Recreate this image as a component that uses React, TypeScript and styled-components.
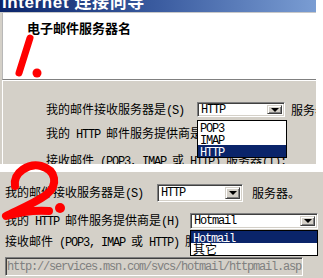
import React from "react";
import styled, { createGlobalStyle } from "styled-components";

const GlobalStyle = createGlobalStyle`
  body {
    margin: 0;
    background: #ffffff;
    font-family: "Noto Sans CJK SC", sans-serif;
    font-size: 12px;
    color: #000;
  }
`;

const Page = styled.div`
  position: relative;
  width: 323px;
  height: 278px;
  overflow: hidden;
  background: #ffffff;
  display: flex;
  flex-direction: column;
`;

const TopShot = styled.section`
  width: 316px;
  height: 164px;
  flex: none;
  background: #d4d0c8;
  display: flex;
  flex-direction: column;
  overflow: hidden;
`;

const TitleBar = styled.div`
  height: 12px;
  flex: none;
  overflow: hidden;
  background: linear-gradient(to right, #0a246a, #3b5ca0 50%, #7a9dd3);
  border-bottom: 1px solid #c8c8c8;
`;

const TitleText = styled.div`
  margin-top: -7px;
  padding-left: 2px;
  font: bold 17px/19px "Liberation Sans", "Noto Sans CJK SC", sans-serif;
  letter-spacing: 0.6px;
  color: #ffffff;
  white-space: nowrap;
`;

const Header = styled.div`
  height: 57px;
  flex: none;
  margin-left: 2px;
  padding: 9px 0 0 24px;
  box-sizing: content-box;
  background: #ffffff;
  border-left: 1px solid #b8b8b8;
  border-bottom: 1px solid #808080;
  font-weight: bold;
  font-size: 13px;
  line-height: 12px;
`;

const Body = styled.div`
  flex: 1;
  margin-left: 2px;
  padding: 21px 0 0 43px;
  border-top: 1px solid #ffffff;
  border-left: 1px solid #ffffff;
  display: flex;
  flex-direction: column;
`;

const BottomShot = styled.section`
  flex: 1;
  margin-top: 8px;
  background: #d4d0c8;
  padding: 12px 0 0 5px;
  display: flex;
  flex-direction: column;
`;

const Row = styled.div<{ $h: number; $mt?: number }>`
  height: ${(p) => p.$h}px;
  margin-top: ${(p) => p.$mt ?? 0}px;
  display: flex;
  align-items: center;
  line-height: 12px;
  white-space: nowrap;
`;

// half-width latin, like SimSun: 6px per character
const Lat = styled.span`
  font-family: "Liberation Mono", monospace;
  font-size: 12px;
  letter-spacing: -1.2px;
`;

const After = styled.span<{ $ml: number }>`
  margin-left: ${(p) => p.$ml}px;
`;

const Combo = styled.div<{ $w: number; $h: number; $ml: number }>`
  position: relative;
  flex: none;
  box-sizing: border-box;
  width: ${(p) => p.$w}px;
  height: ${(p) => p.$h}px;
  margin-left: ${(p) => p.$ml}px;
  background: #ffffff;
  border: 1px solid;
  border-color: #808080 #ffffff #ffffff #808080;
  box-shadow: inset 1px 1px #404040, inset -1px -1px #d4d0c8;
  display: flex;
  align-items: center;
  padding: 2px;
`;

const ComboValue = styled.span`
  flex: 1;
  padding-left: 1px;
  font-family: "Liberation Mono", monospace;
  font-size: 12px;
  letter-spacing: -1.2px;
`;

const ArrowBtn = styled.span`
  flex: none;
  align-self: stretch;
  width: 15px;
  box-sizing: border-box;
  background: #d4d0c8;
  border: 1px solid;
  border-color: #d4d0c8 #404040 #404040 #d4d0c8;
  box-shadow: inset 1px 1px #ffffff, inset -1px -1px #808080;
  display: flex;
  align-items: center;
  justify-content: center;

  &::after {
    content: "";
    width: 0;
    height: 0;
    border-left: 4px solid transparent;
    border-right: 4px solid transparent;
    border-top: 4px solid #000;
  }
`;

const DropList = styled.ul<{ $top: number; $w: number }>`
  position: absolute;
  z-index: 3;
  top: ${(p) => p.$top}px;
  left: -1px;
  width: ${(p) => p.$w}px;
  box-sizing: border-box;
  margin: 0;
  padding: 0;
  list-style: none;
  background: #ffffff;
  border: 1px solid #000000;
`;

const DropItem = styled.li<{ $sel?: boolean }>`
  height: 12px;
  line-height: 12px;
  padding-left: 2px;
  background: ${(p) => (p.$sel ? "#0a246a" : "#ffffff")};
  color: ${(p) => (p.$sel ? "#ffffff" : "#000000")};
`;

const UrlBox = styled.div`
  width: 298px;
  height: 19px;
  margin-top: 9px;
  flex: none;
  box-sizing: border-box;
  padding-left: 1px;
  background: #d4d0c8;
  border: 1px solid;
  border-color: #808080 #ffffff #ffffff #808080;
  box-shadow: inset 1px 1px #404040, inset -1px -1px #d4d0c8;
  color: #808080;
  font-family: "Liberation Mono", monospace;
  font-size: 12px;
  letter-spacing: -1.2px;
  white-space: nowrap;
  overflow: hidden;
  display: flex;
  align-items: center;
`;

const Scribble = styled.svg`
  position: absolute;
  inset: 0;
  z-index: 5;
  pointer-events: none;
`;

const ServerLabel = () => (
  <span>
    接收邮件<Lat> (POP3, IMAP </Lat>或<Lat> HTTP) </Lat>服务器<Lat>(I):</Lat>
  </span>
);

const App = () => {
  return (
    <Page>
      <GlobalStyle />
      <TopShot>
        <TitleBar>
          <TitleText>Internet 连接向导</TitleText>
        </TitleBar>
        <Header>电子邮件服务器名</Header>
        <Body>
          <Row $h={15}>
            <span>
              我的邮件接收服务器是<Lat>(S)</Lat>
            </span>
            <Combo $w={88} $h={15} $ml={13}>
              <ComboValue>HTTP</ComboValue>
              <ArrowBtn />
              <DropList $top={17} $w={90}>
                <DropItem>
                  <Lat>POP3</Lat>
                </DropItem>
                <DropItem>
                  <Lat>IMAP</Lat>
                </DropItem>
                <DropItem $sel>
                  <Lat>HTTP</Lat>
                </DropItem>
              </DropList>
            </Combo>
            <After $ml={6}>服务器。</After>
          </Row>
          <Row $h={14} $mt={10}>
            <span>
              我的<Lat> HTTP </Lat>邮件服务提供商是<Lat>(H)</Lat>
            </span>
          </Row>
          <Row $h={14} $mt={13}>
            <ServerLabel />
          </Row>
        </Body>
      </TopShot>

      <BottomShot>
        <Row $h={18}>
          <span>
            我的邮件接收服务器是<Lat>(S)</Lat>
          </span>
          <Combo $w={86} $h={18} $ml={14}>
            <ComboValue>HTTP</ComboValue>
            <ArrowBtn />
          </Combo>
          <After $ml={9}>服务器。</After>
        </Row>
        <Row $h={16} $mt={11}>
          <span>
            我的<Lat> HTTP </Lat>邮件服务提供商是<Lat>(H)</Lat>
          </span>
          <Combo $w={128} $h={16} $ml={11}>
            <ComboValue>Hotmail</ComboValue>
            <ArrowBtn />
            <DropList $top={16} $w={128}>
              <DropItem $sel>
                <Lat>Hotmail</Lat>
              </DropItem>
              <DropItem>其它</DropItem>
            </DropList>
          </Combo>
        </Row>
        <Row $h={12} $mt={7}>
          <ServerLabel />
        </Row>
        <UrlBox>http://services.msn.com/svcs/hotmail/httpmail.asp</UrlBox>
      </BottomShot>

      <Scribble width="323" height="278" viewBox="0 0 323 278">
        <g fill="none" stroke="#ff0000" strokeLinecap="round" strokeLinejoin="round">
          <path d="M30 38 L19 73" strokeWidth="7" />
          <path
            d="M15 186 C13 172 29 163 41 166 C56 170 59 185 46 195 C35 203 18 210 6 216 C20 212 35 210 49 211"
            strokeWidth="8"
          />
        </g>
        <g fill="#ff0000">
          <circle cx="37" cy="73" r="4.5" />
          <circle cx="60" cy="208" r="5" />
        </g>
      </Scribble>
    </Page>
  );
};

export default App;
